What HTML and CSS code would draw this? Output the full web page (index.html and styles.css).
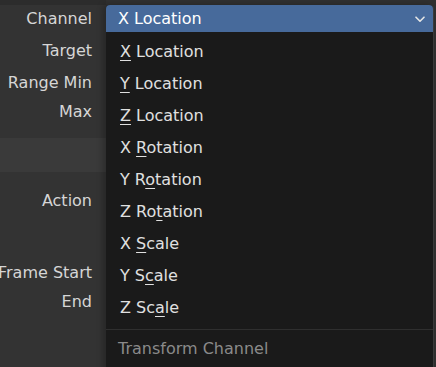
FILE: index.html
```html
<!DOCTYPE html>
<html>
<head>
<meta charset="utf-8">
<link rel="stylesheet" href="styles.css">
</head>
<body>
<div class="panel">
  <div class="topstrip"></div>
  <div class="row r-channel"><span class="label">Channel</span></div>
  <div class="row r-target"><span class="label">Target</span></div>
  <div class="row r-min"><span class="label">Range Min</span></div>
  <div class="row r-max"><span class="label">Max</span></div>
  <div class="band"></div>
  <div class="row r-action"><span class="label">Action</span></div>
  <div class="row r-start"><span class="label">Frame Start</span></div>
  <div class="row r-end"><span class="label">End</span></div>
</div>

<div class="menu">
  <div class="field">
    <span class="field-text">X Location</span>
    <svg class="chev" width="10" height="7" viewBox="0 0 10 7"><path d="M1 1.2 L5 5.2 L9 1.2" fill="none" stroke="#e6e6e6" stroke-width="1.6" stroke-linecap="round" stroke-linejoin="round"/></svg>
  </div>
  <ul class="items">
    <li><u>X</u> Location</li>
    <li><u>Y</u> Location</li>
    <li><u>Z</u> Location</li>
    <li>X <u>R</u>otation</li>
    <li>Y R<u>o</u>tation</li>
    <li>Z Ro<u>t</u>ation</li>
    <li>X <u>S</u>cale</li>
    <li>Y S<u>c</u>ale</li>
    <li>Z Sc<u>a</u>le</li>
  </ul>
  <div class="sep"></div>
  <div class="footer">Transform Channel</div>
</div>
</body>
</html>
```
FILE: styles.css
```css
html, body {
  margin: 0;
  padding: 0;
  width: 436px;
  height: 367px;
  overflow: hidden;
  background: #303030;
  font-family: "DejaVu Sans", sans-serif;
  font-size: 16px;
}
.panel {
  display: flex;
  flex-direction: column;
  width: 106px;
  height: 367px;
  background: #333333;
}
.topstrip {
  height: 5px;
  background: #2c2c2c;
}
.row {
  height: 26px;
  display: flex;
  align-items: center;
  justify-content: flex-end;
  padding-right: 14px;
}
.label {
  color: #d6d6d6;
  white-space: nowrap;
}
.r-channel { height: 27px; }
.r-target { margin-top: 5px; }
.r-min { margin-top: 6px; }
.r-max { margin-top: 3px; }
.band {
  margin-top: 14px;
  height: 34px;
  background: #3a3a3a;
}
.r-action { margin-top: 15px; }
.r-start { margin-top: 46px; }
.r-end { margin-top: 3px; }

.menu {
  position: absolute;
  left: 106px;
  top: 5px;
  width: 327px;
  height: 380px;
  background: #1a1a1a;
  border-right: 1px solid #3a3a3a;
  box-shadow: -3px 0 6px rgba(0,0,0,0.25);
  border-radius: 4px 4px 0 0;
}
.field {
  height: 27px;
  background: #476a9b;
  border-radius: 4px 4px 0 0;
  display: flex;
  align-items: center;
  justify-content: space-between;
  padding: 0 8px 0 12px;
}
.field-text {
  color: #ffffff;
}
.chev {
  display: block;
  margin-top: 2px;
}
.items {
  list-style: none;
  margin: 4px 0 0 0;
  padding: 0;
}
.items li {
  height: 32px;
  line-height: 32px;
  padding-left: 14px;
  color: #e0e0e0;
  white-space: nowrap;
}
.items u {
  text-decoration: underline;
  text-decoration-thickness: 1px;
  text-underline-offset: 3px;
}
.sep {
  margin-top: 5px;
  height: 1px;
  background: #2f2f2f;
}
.footer {
  height: 38px;
  line-height: 38px;
  padding-left: 12px;
  color: #8a8a8a;
}
```
